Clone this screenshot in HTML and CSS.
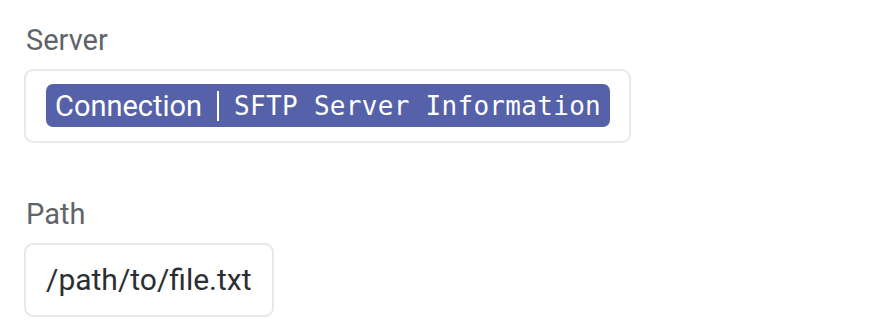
FILE: index.html
```html
<!DOCTYPE html>
<html lang="en">
<head>
  <meta charset="UTF-8" />
  <title>Server</title>
  <link rel="stylesheet" href="styles.css">
</head>
<body>
  <section class="field">
    <div class="field-label">Server</div>
    <div class="field-box">
      <span class="chip">
        <span class="chip-type">Connection</span>
        <span class="chip-sep"></span>
        <span class="chip-name">SFTP Server Information</span>
      </span>
    </div>
  </section>

  <section class="field">
    <div class="field-label">Path</div>
    <div class="field-box">
      <span class="field-value">/path/to/file.txt</span>
    </div>
  </section>
</body>
</html>
```

FILE: styles.css
```css
body {
  margin: 0;
  padding: 19px 24px 0;
  font-family: Roboto, "Liberation Sans", sans-serif;
  background-color: #fff;
  color: #2b2f33;
}

.field {
  margin-bottom: 50px;
}

.field-label {
  font-size: 29px;
  line-height: 42px;
  color: #5f6469;
  margin-bottom: 8px;
  padding-left: 2px;
}

.field-box {
  display: inline-flex;
  align-items: center;
  border: 2px solid #e6e8eb;
  border-radius: 9px;
  padding: 13px 19px 14px 20px;
}

.chip {
  display: inline-flex;
  align-items: center;
  height: 43px;
  padding: 0 9px;
  border-radius: 7px;
  background-color: #5561a8;
  color: #fff;
}

.chip-type {
  font-size: 29px;
}

.chip-sep {
  width: 2px;
  height: 30px;
  background-color: #fff;
  margin: 0 15px;
}

.chip-name {
  font-family: "DejaVu Sans Mono", monospace;
  font-size: 26px;
  letter-spacing: 0.3px;
}

.field-value {
  font-size: 30px;
  line-height: 43px;
  padding-right: 1px;
}
```
